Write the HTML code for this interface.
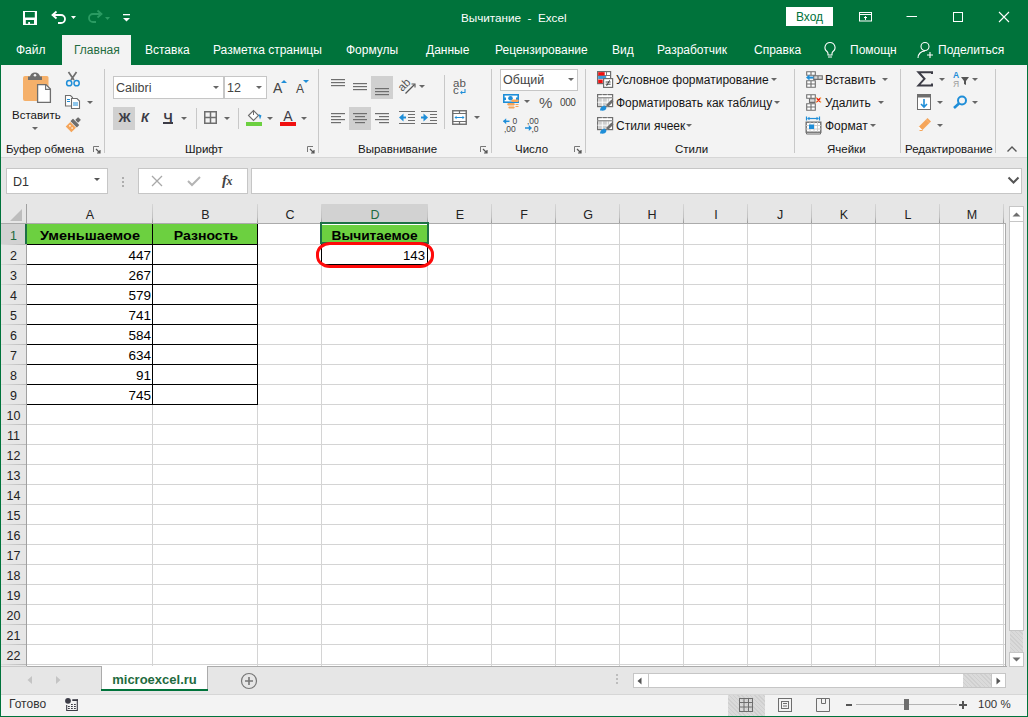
<!DOCTYPE html>
<html><head><meta charset="utf-8"><style>
html,body{margin:0;padding:0;}
body{width:1028px;height:717px;position:relative;overflow:hidden;background:#E6E6E6;font-family:"Liberation Sans",sans-serif;}
.t{position:absolute;white-space:pre;line-height:14px;font-family:"Liberation Sans",sans-serif;}
svg{overflow:visible}
</style></head><body>
<div style="position:absolute;left:0px;top:0px;width:1028px;height:65px;background:#00733B"></div>
<div class="t" style="left:461px;top:11px;color:#fff;font-size:11.7px">Вычитание&nbsp; - &nbsp;Excel</div>
<div style="position:absolute;left:786px;top:7px;width:47px;height:19px;background:#fff"></div>
<div class="t" style="left:786px;top:10px;width:47px;text-align:center;color:#00733B;font-size:12px">Вход</div>
<svg style="position:absolute;left:855px;top:8px;" width="20" height="18" viewBox="0 0 20 18"><rect x="4.5" y="4.5" width="12" height="8.5" fill="none" stroke="#fff"/><line x1="4" y1="6.5" x2="17" y2="6.5" stroke="#fff"/><path d="M10.5 12V8.5M9 10l1.5-1.5L12 10" fill="none" stroke="#fff"/></svg>
<svg style="position:absolute;left:902px;top:8px;" width="20" height="18" viewBox="0 0 20 18"><line x1="4.5" y1="8.5" x2="15" y2="8.5" stroke="#fff"/></svg>
<svg style="position:absolute;left:948px;top:8px;" width="20" height="18" viewBox="0 0 20 18"><rect x="5.5" y="4.5" width="9" height="9" fill="none" stroke="#fff"/></svg>
<svg style="position:absolute;left:994px;top:8px;" width="20" height="18" viewBox="0 0 20 18"><path d="M5 4l10 10M15 4L5 14" stroke="#fff" stroke-width="1.1"/></svg>
<svg style="position:absolute;left:20px;top:8px;" width="20" height="20" viewBox="0 0 20 20"><rect x="3" y="3" width="14" height="14" fill="#fff"/><rect x="5" y="4" width="9.8" height="5.5" fill="#00733B"/><rect x="5.8" y="12" width="8.2" height="2" fill="#00733B"/><rect x="5.8" y="14" width="2.4" height="1.8" fill="#00733B"/><rect x="10" y="14" width="4" height="1.8" fill="#00733B"/></svg>
<svg style="position:absolute;left:48px;top:9px;" width="30" height="20" viewBox="0 0 30 20"><path d="M6 6h7a4 4 0 010 8h-3" fill="none" stroke="#fff" stroke-width="1.8"/><path d="M8.5 2.5L4.5 6l4 3.5" fill="none" stroke="#fff" stroke-width="1.8"/><path d="M23 7h5l-2.5 3z" fill="#fff"/></svg>
<svg style="position:absolute;left:86px;top:8px;" width="30" height="20" viewBox="0 0 30 20"><path d="M14 6H7a4 4 0 000 8h3" fill="none" stroke="#2A9B62" stroke-width="1.8"/><path d="M11.5 2.5L15.5 6l-4 3.5" fill="none" stroke="#2A9B62" stroke-width="1.8"/><path d="M19 9h5l-2.5 3z" fill="#2A9B62"/></svg>
<svg style="position:absolute;left:120px;top:8px;" width="14" height="20" viewBox="0 0 14 20"><rect x="3" y="6" width="7" height="1.3" fill="#fff"/><path d="M3 10h7l-3.5 3.5z" fill="#fff"/></svg>
<div style="position:absolute;left:62px;top:35px;width:69px;height:30px;background:#F3F3F3"></div>
<div class="t" style="left:16px;top:43px;color:#fff;font-size:12px">Файл</div>
<div class="t" style="left:74px;top:43px;color:#1F6B40;font-size:12px">Главная</div>
<div class="t" style="left:145px;top:43px;color:#fff;font-size:12px">Вставка</div>
<div class="t" style="left:213px;top:43px;color:#fff;font-size:12px">Разметка страницы</div>
<div class="t" style="left:346px;top:43px;color:#fff;font-size:12px">Формулы</div>
<div class="t" style="left:426px;top:43px;color:#fff;font-size:12px">Данные</div>
<div class="t" style="left:495px;top:43px;color:#fff;font-size:12px">Рецензирование</div>
<div class="t" style="left:612px;top:43px;color:#fff;font-size:12px">Вид</div>
<div class="t" style="left:657px;top:43px;color:#fff;font-size:12px">Разработчик</div>
<div class="t" style="left:754px;top:43px;color:#fff;font-size:12px">Справка</div>
<div class="t" style="left:850px;top:43px;color:#fff;font-size:12px">Помощн</div>
<div class="t" style="left:938px;top:43px;color:#fff;font-size:12px">Поделиться</div>
<svg style="position:absolute;left:822px;top:40px;" width="16" height="20" viewBox="0 0 16 20"><path d="M8 2.5a5 5 0 00-3 9c.7.6 1 1.3 1 2.2V15h4v-1.3c0-.9.3-1.6 1-2.2a5 5 0 00-3-9z" fill="none" stroke="#fff" stroke-width="1.1"/><line x1="6" y1="17" x2="10" y2="17" stroke="#fff"/></svg>
<svg style="position:absolute;left:916px;top:40px;" width="20" height="20" viewBox="0 0 20 20"><circle cx="9" cy="6.5" r="4" fill="none" stroke="#fff" stroke-width="1.1"/><path d="M2 18c0-4 3-7 7-7" fill="none" stroke="#fff" stroke-width="1.1"/><path d="M14 12v6M11 15h6" stroke="#fff" stroke-width="1.1"/></svg>
<div style="position:absolute;left:1px;top:65px;width:1026px;height:92px;background:#F3F3F3"></div>
<div style="position:absolute;left:1px;top:157px;width:1026px;height:1px;background:#D6D6D6"></div>
<div style="position:absolute;left:1px;top:158px;width:1026px;height:508px;background:#E6E6E6"></div>
<div style="position:absolute;left:104px;top:69px;width:1px;height:84px;background:#C8C8C8"></div>
<div style="position:absolute;left:318px;top:69px;width:1px;height:84px;background:#C8C8C8"></div>
<div style="position:absolute;left:491px;top:69px;width:1px;height:84px;background:#C8C8C8"></div>
<div style="position:absolute;left:585px;top:69px;width:1px;height:84px;background:#C8C8C8"></div>
<div style="position:absolute;left:794px;top:69px;width:1px;height:84px;background:#C8C8C8"></div>
<div style="position:absolute;left:900px;top:69px;width:1px;height:84px;background:#C8C8C8"></div>
<div style="position:absolute;left:995px;top:69px;width:1px;height:84px;background:#C8C8C8"></div>
<div class="t" style="left:6px;top:142px;color:#161616;font-size:11.5px">Буфер обмена</div>
<div class="t" style="left:185px;top:142px;color:#161616;font-size:11.5px">Шрифт</div>
<div class="t" style="left:358px;top:142px;color:#161616;font-size:11.5px">Выравнивание</div>
<div class="t" style="left:515px;top:142px;color:#161616;font-size:11.5px">Число</div>
<div class="t" style="left:675px;top:142px;color:#161616;font-size:11.5px">Стили</div>
<div class="t" style="left:827px;top:142px;color:#161616;font-size:11.5px">Ячейки</div>
<div class="t" style="left:905px;top:142px;color:#161616;font-size:11.5px">Редактирование</div>
<svg style="position:absolute;left:93px;top:146px;" width="8" height="8" viewBox="0 0 8 8"><path d="M0.5 6V0.5H6" fill="none" stroke="#777"/><path d="M3 3l4 4M7 4v3H4" fill="none" stroke="#555" stroke-width="1.2"/></svg>
<svg style="position:absolute;left:307px;top:146px;" width="8" height="8" viewBox="0 0 8 8"><path d="M0.5 6V0.5H6" fill="none" stroke="#777"/><path d="M3 3l4 4M7 4v3H4" fill="none" stroke="#555" stroke-width="1.2"/></svg>
<svg style="position:absolute;left:480px;top:146px;" width="8" height="8" viewBox="0 0 8 8"><path d="M0.5 6V0.5H6" fill="none" stroke="#777"/><path d="M3 3l4 4M7 4v3H4" fill="none" stroke="#555" stroke-width="1.2"/></svg>
<svg style="position:absolute;left:574px;top:146px;" width="8" height="8" viewBox="0 0 8 8"><path d="M0.5 6V0.5H6" fill="none" stroke="#777"/><path d="M3 3l4 4M7 4v3H4" fill="none" stroke="#555" stroke-width="1.2"/></svg>
<svg style="position:absolute;left:1006px;top:144px;" width="12" height="9" viewBox="0 0 12 9"><path d="M1.5 7.5l4.5-4.5 4.5 4.5" fill="none" stroke="#555" stroke-width="1.4"/></svg>
<svg style="position:absolute;left:0px;top:0px;" width="100" height="140" viewBox="0 0 100 140">
<path d="M25 76h22a1.5 1.5 0 011.5 1.5V101H25a2 2 0 01-2-2V78a2 2 0 012-2z" fill="#F5B06A"/>
<path d="M28 76.5h14v3.5H28z" fill="#6E6E6E"/>
<path d="M30 77a5 4.5 0 0110 0z" fill="#6E6E6E"/>
<circle cx="35" cy="75.3" r="1.3" fill="#F3F3F3"/>
<path d="M37.6 84.6h8.4l4.4 4.4v13.4H37.6z" fill="#fff" stroke="#6E6E6E" stroke-width="1.3"/>
<path d="M45.6 84.6v4.8h4.8" fill="none" stroke="#6E6E6E" stroke-width="1.1"/>
<path d="M68.5 72l5.5 8M76.5 72l-5.5 8" stroke="#6E6E6E" stroke-width="1.7"/>
<circle cx="69.2" cy="83.2" r="2.6" fill="none" stroke="#1F8ED8" stroke-width="1.5"/>
<circle cx="76.6" cy="83.2" r="2.6" fill="none" stroke="#1F8ED8" stroke-width="1.5"/>
<path d="M65.5 95.5h5l2 2v8.5h-7z" fill="#fff" stroke="#6E6E6E" stroke-width="1.1"/>
<path d="M71.5 98.5h5.5l2.5 2.5v7.5h-8z" fill="#fff" stroke="#6E6E6E" stroke-width="1.1"/>
<path d="M67 99.5h3M67 101.5h3M73 103h5M73 105h5" stroke="#1F8ED8" stroke-width="1"/>
<g transform="translate(73.5 124.5) rotate(45)"><rect x="-4" y="0.5" width="8" height="6.5" fill="#F5A55A"/><circle cx="-1.5" cy="3.5" r="0.8" fill="#fff"/><circle cx="1.5" cy="3.5" r="0.8" fill="#fff"/><rect x="-4.5" y="-3.8" width="9" height="3.6" rx="0.5" fill="#6E6E6E"/><rect x="-2" y="-8.5" width="4" height="4" rx="0.5" fill="#6E6E6E"/></g>
</svg>
<div class="t" style="left:12px;top:108px;color:#161616;font-size:11.5px">Вставить</div>
<svg style="position:absolute;left:32px;top:127px;" width="6" height="4" viewBox="0 0 6 4"><path d="M0 0h6l-3 3z" fill="#666"/></svg>
<svg style="position:absolute;left:87px;top:101px;" width="6" height="4" viewBox="0 0 6 4"><path d="M0 0h6l-3 3z" fill="#666"/></svg>
<div style="position:absolute;left:113px;top:76px;width:111px;height:23px;background:#fff;border:1px solid #C6C6C6;box-sizing:border-box"></div>
<div style="position:absolute;left:224px;top:76px;width:43px;height:23px;background:#fff;border:1px solid #C6C6C6;box-sizing:border-box"></div>
<div class="t" style="left:116px;top:81px;color:#444;font-size:12.5px">Calibri</div>
<div class="t" style="left:227px;top:81px;color:#444;font-size:12.5px">12</div>
<svg style="position:absolute;left:213px;top:86px;" width="6" height="4" viewBox="0 0 6 4"><path d="M0 0h6l-3 3z" fill="#666"/></svg>
<svg style="position:absolute;left:256px;top:86px;" width="6" height="4" viewBox="0 0 6 4"><path d="M0 0h6l-3 3z" fill="#666"/></svg>
<div class="t" style="left:273px;top:81px;color:#444;font-size:14px">A</div>
<svg style="position:absolute;left:281px;top:80px;" width="6" height="3" viewBox="0 0 6 3"><path d="M0 3h6L3 0z" fill="#1F8ED8"/></svg>
<div class="t" style="left:296px;top:82px;color:#444;font-size:12px">A</div>
<svg style="position:absolute;left:303px;top:80px;" width="6" height="3" viewBox="0 0 6 3"><path d="M0 0h6L3 3z" fill="#1F8ED8"/></svg>
<div style="position:absolute;left:113px;top:107px;width:22px;height:23px;background:#D0D0D0"></div>
<div class="t" style="left:113px;top:111px;width:23px;text-align:center;color:#3C3C46;font-size:13.5px;font-weight:bold">Ж</div>
<div class="t" style="left:136px;top:111px;width:18px;text-align:center;color:#3C3C46;font-size:13px;font-weight:bold;font-style:italic">К</div>
<div class="t" style="left:160px;top:111px;width:16px;text-align:center;color:#3C3C46;font-size:13px;font-weight:bold">Ч</div>
<div style="position:absolute;left:163px;top:122px;width:10px;height:2px;background:#3C3C46"></div>
<svg style="position:absolute;left:181px;top:117px;" width="6" height="4" viewBox="0 0 6 4"><path d="M0 0h6l-3 3z" fill="#666"/></svg>
<div style="position:absolute;left:196px;top:108px;width:1px;height:21px;background:#C8C8C8"></div>
<svg style="position:absolute;left:204px;top:111px;" width="13" height="13" viewBox="0 0 13 13"><rect x="0.75" y="0.75" width="11.5" height="11.5" fill="none" stroke="#6E6E6E" stroke-width="1.5"/><path d="M6.5 0.5v12M0.5 6.5h12" stroke="#6E6E6E" stroke-width="1.5"/></svg>
<svg style="position:absolute;left:224px;top:117px;" width="6" height="4" viewBox="0 0 6 4"><path d="M0 0h6l-3 3z" fill="#666"/></svg>
<div style="position:absolute;left:238px;top:108px;width:1px;height:21px;background:#C8C8C8"></div>
<svg style="position:absolute;left:246px;top:109px;" width="18" height="13" viewBox="0 0 18 13"><path d="M2.5 6.5l5-5 5 5-5 5z" fill="#fff" stroke="#6E6E6E" stroke-width="1.1"/><path d="M7.5 1v5" stroke="#6E6E6E"/><path d="M12.5 5l3 1.5-1.5 4z" fill="#1F8ED8"/></svg>
<div style="position:absolute;left:246px;top:122px;width:16px;height:4px;background:#6CD040"></div>
<svg style="position:absolute;left:267px;top:117px;" width="6" height="4" viewBox="0 0 6 4"><path d="M0 0h6l-3 3z" fill="#666"/></svg>
<div class="t" style="left:280px;top:109px;width:16px;text-align:center;color:#3C3C46;font-size:14px">A</div>
<div style="position:absolute;left:280px;top:122px;width:16px;height:4px;background:#F01010"></div>
<svg style="position:absolute;left:301px;top:117px;" width="6" height="4" viewBox="0 0 6 4"><path d="M0 0h6l-3 3z" fill="#666"/></svg>
<svg style="position:absolute;left:331px;top:79px;" width="16" height="11" viewBox="0 0 16 11"><rect x="0" y="0" width="14" height="1.2" fill="#6E6E6E"/><rect x="0" y="3" width="14" height="1.2" fill="#6E6E6E"/><rect x="0" y="6" width="14" height="1.2" fill="#6E6E6E"/></svg>
<svg style="position:absolute;left:353px;top:83px;" width="16" height="11" viewBox="0 0 16 11"><rect x="0" y="0" width="14" height="1.2" fill="#6E6E6E"/><rect x="0" y="3" width="14" height="1.2" fill="#6E6E6E"/><rect x="0" y="6" width="14" height="1.2" fill="#6E6E6E"/></svg>
<div style="position:absolute;left:371px;top:76px;width:22px;height:23px;background:#D0D0D0"></div>
<svg style="position:absolute;left:375px;top:88px;" width="16" height="11" viewBox="0 0 16 11"><rect x="0" y="0" width="14" height="1.2" fill="#6E6E6E"/><rect x="0" y="3" width="14" height="1.2" fill="#6E6E6E"/><rect x="0" y="6" width="14" height="1.2" fill="#6E6E6E"/></svg>
<svg style="position:absolute;left:396px;top:77px;" width="26" height="20" viewBox="0 0 26 20"><text x="2" y="11" font-family="Liberation Sans" font-size="11.5" fill="#555" transform="rotate(-45 9 8)">ab</text><path d="M9.5 16.5l9-9" fill="none" stroke="#555" stroke-width="1.3"/><path d="M15.5 7h3.5v3.5" fill="none" stroke="#555" stroke-width="1.1"/></svg>
<svg style="position:absolute;left:419px;top:85px;" width="6" height="4" viewBox="0 0 6 4"><path d="M0 0h6l-3 3z" fill="#666"/></svg>
<div style="position:absolute;left:444px;top:75px;width:1px;height:54px;background:#C8C8C8"></div>
<div class="t" style="left:453px;top:76px;color:#555;font-size:11.5px">ab</div>
<div class="t" style="left:453px;top:83px;color:#555;font-size:11.5px">c</div>
<svg style="position:absolute;left:460px;top:89px;" width="6" height="6" viewBox="0 0 6 6"><path d="M5 0v3.5H1.5" fill="none" stroke="#1F8ED8" stroke-width="1.1"/><path d="M0 3.5l2.2-2v4z" fill="#1F8ED8"/></svg>
<svg style="position:absolute;left:331px;top:113px;" width="16" height="14" viewBox="0 0 16 14"><rect x="0" y="0" width="14" height="1.2" fill="#6E6E6E"/><rect x="0" y="3" width="10" height="1.2" fill="#6E6E6E"/><rect x="0" y="6" width="14" height="1.2" fill="#6E6E6E"/><rect x="0" y="9" width="10" height="1.2" fill="#6E6E6E"/></svg>
<div style="position:absolute;left:349px;top:107px;width:22px;height:23px;background:#D0D0D0"></div>
<svg style="position:absolute;left:353px;top:113px;" width="16" height="14" viewBox="0 0 16 14"><rect x="0" y="0" width="14" height="1.2" fill="#6E6E6E"/><rect x="2" y="3" width="10" height="1.2" fill="#6E6E6E"/><rect x="0" y="6" width="14" height="1.2" fill="#6E6E6E"/><rect x="2" y="9" width="10" height="1.2" fill="#6E6E6E"/></svg>
<svg style="position:absolute;left:375px;top:113px;" width="16" height="14" viewBox="0 0 16 14"><rect x="0" y="0" width="14" height="1.2" fill="#6E6E6E"/><rect x="4" y="3" width="10" height="1.2" fill="#6E6E6E"/><rect x="0" y="6" width="14" height="1.2" fill="#6E6E6E"/><rect x="4" y="9" width="10" height="1.2" fill="#6E6E6E"/></svg>
<svg style="position:absolute;left:399px;top:110px;" width="18" height="16" viewBox="0 0 18 16"><path d="M0 1.5h16M9 4.5h7M9 7.5h7M9 10.5h7M0 13.5h16" stroke="#6E6E6E" stroke-width="1.2"/><path d="M0 7.5l4.5-4v8z" fill="#1F8ED8"/><path d="M3 7.5h4" stroke="#1F8ED8" stroke-width="2"/></svg>
<svg style="position:absolute;left:421px;top:110px;" width="18" height="16" viewBox="0 0 18 16"><path d="M0 1.5h16M9 4.5h7M9 7.5h7M9 10.5h7M0 13.5h16" stroke="#6E6E6E" stroke-width="1.2"/><path d="M7 7.5l-4.5-4v8z" fill="#1F8ED8"/><path d="M0 7.5h4" stroke="#1F8ED8" stroke-width="2"/></svg>
<svg style="position:absolute;left:452px;top:110px;" width="16" height="15" viewBox="0 0 16 15"><rect x="0.75" y="0.75" width="13.5" height="13.5" fill="#fff" stroke="#6E6E6E" stroke-width="1.4"/><path d="M0.5 3.5h14M0.5 11.5h14M7.5 0.5v3M7.5 11.5v3" stroke="#6E6E6E" stroke-width="1.2"/><path d="M4 7.5h7" stroke="#1F8ED8" stroke-width="1"/><path d="M2.5 7.5l2-1.7v3.4zM12.5 7.5l-2-1.7v3.4z" fill="#1F8ED8"/></svg>
<svg style="position:absolute;left:474px;top:116px;" width="6" height="4" viewBox="0 0 6 4"><path d="M0 0h6l-3 3z" fill="#666"/></svg>
<div style="position:absolute;left:500px;top:69px;width:78px;height:22px;background:#fff;border:1px solid #C6C6C6;box-sizing:border-box"></div>
<div class="t" style="left:503px;top:73px;color:#444;font-size:12.5px">Общий</div>
<svg style="position:absolute;left:568px;top:78px;" width="6" height="4" viewBox="0 0 6 4"><path d="M0 0h6l-3 3z" fill="#666"/></svg>
<svg style="position:absolute;left:500px;top:90px;" width="22" height="22" viewBox="0 0 22 22"><rect x="3.8" y="4.8" width="14.4" height="7.4" fill="#fff" stroke="#1F8ED8" stroke-width="1.6"/><path d="M3 7.5h3v2.5H3zM16 7.5h3v2.5h-3z" fill="#1F8ED8"/><circle cx="10.5" cy="8.3" r="2.3" fill="#1F8ED8"/><path d="M12 12h6l1-1.2-1-1.2h-6l-1 1.2z" fill="#F5A55A"/><path d="M8 15.5h6l1-1.2-1-1.2H8l-1 1.2z" fill="#F5A55A"/><path d="M9 18.5h5l.8-1-.8-1H9l-.8 1z" fill="#F5A55A"/><path d="M15.5 14.5h3M15.5 16.5h3" stroke="#F5A55A" stroke-width="1"/></svg>
<svg style="position:absolute;left:524px;top:100px;" width="6" height="4" viewBox="0 0 6 4"><path d="M0 0h6l-3 3z" fill="#666"/></svg>
<div class="t" style="left:539px;top:96px;color:#555;font-size:15px">%</div>
<div class="t" style="left:560px;top:96px;color:#444;font-size:10px;letter-spacing:-0.4px">000</div>
<svg style="position:absolute;left:500px;top:114px;" width="22" height="20" viewBox="0 0 22 20"><text x="12.5" y="10" font-family="Liberation Sans" font-size="8.5" fill="#444">0</text><text x="4" y="17.5" font-family="Liberation Sans" font-size="8.5" fill="#444">,00</text><path d="M3.5 7.3h6" stroke="#1F8ED8" stroke-width="1.5"/><path d="M3 7.3l3.2-3v6z" fill="#1F8ED8"/></svg>
<svg style="position:absolute;left:522px;top:114px;" width="22" height="20" viewBox="0 0 22 20"><text x="5" y="10" font-family="Liberation Sans" font-size="8.5" fill="#444">,00</text><text x="9.5" y="17.5" font-family="Liberation Sans" font-size="8.5" fill="#444">,0</text><path d="M3 14h6" stroke="#1F8ED8" stroke-width="1.5"/><path d="M10 14l-3.2-3v6z" fill="#1F8ED8"/></svg>
<svg style="position:absolute;left:597px;top:71px;" width="17" height="17" viewBox="0 0 17 17"><rect x="0.6" y="0.6" width="13" height="12" fill="#fff" stroke="#6E6E6E" stroke-width="1.2"/><path d="M5 0.5v4M9.5 0.5v4M0.5 4.5h13" stroke="#6E6E6E" stroke-width="0.9"/><rect x="1.2" y="1.2" width="6.5" height="3.3" fill="#F01010"/><rect x="1.2" y="5" width="8" height="3" fill="#3C9AD8"/><rect x="1.2" y="8.5" width="4.5" height="3.6" fill="#F01010"/><rect x="6.6" y="7.6" width="9" height="8.8" fill="#fff" stroke="#6E6E6E" stroke-width="1.2"/><path d="M8.6 11h5M8.6 13.2h5M12.6 9.3l-3 5.6" stroke="#333" stroke-width="0.9"/></svg>
<div class="t" style="left:616px;top:73px;color:#161616;font-size:12px">Условное форматирование</div>
<svg style="position:absolute;left:771px;top:78px;" width="6" height="4" viewBox="0 0 6 4"><path d="M0 0h6l-3 3z" fill="#666"/></svg>
<svg style="position:absolute;left:597px;top:94px;" width="17" height="17" viewBox="0 0 17 17"><rect x="0.6" y="0.6" width="15" height="12" fill="#fff" stroke="#6E6E6E" stroke-width="1.2"/><rect x="1.2" y="4" width="11" height="8" fill="#CFCFCF"/><path d="M0.5 3.8h15M5.3 0.5v12M10.3 0.5v12M0.5 8.2h12" stroke="#fff" stroke-width="0.9"/><path d="M0.5 3.8h15" stroke="#6E6E6E" stroke-width="1"/><path d="M9 11l5.5-5.5 2 2-5.5 5.5z" fill="#6E6E6E"/><path d="M3 16.5c0-2.5 1.5-4.5 4.5-5l2 2c-.5 3-2.5 3.5-6.5 3z" fill="#1F8ED8"/></svg>
<div class="t" style="left:616px;top:96px;color:#161616;font-size:12px">Форматировать как таблицу</div>
<svg style="position:absolute;left:774px;top:101px;" width="6" height="4" viewBox="0 0 6 4"><path d="M0 0h6l-3 3z" fill="#666"/></svg>
<svg style="position:absolute;left:597px;top:117px;" width="17" height="17" viewBox="0 0 17 17"><rect x="0.6" y="0.6" width="15" height="12" fill="#fff" stroke="#6E6E6E" stroke-width="1.2"/><rect x="1.2" y="4" width="11" height="8" fill="#CFCFCF"/><path d="M0.5 3.8h15M5.3 0.5v12M10.3 0.5v12M0.5 8.2h12" stroke="#fff" stroke-width="0.9"/><path d="M0.5 3.8h15" stroke="#6E6E6E" stroke-width="1"/><path d="M9 11l5.5-5.5 2 2-5.5 5.5z" fill="#6E6E6E"/><path d="M3 16.5c0-2.5 1.5-4.5 4.5-5l2 2c-.5 3-2.5 3.5-6.5 3z" fill="#1F8ED8"/></svg>
<div class="t" style="left:616px;top:119px;color:#161616;font-size:12px">Стили ячеек</div>
<svg style="position:absolute;left:686px;top:124px;" width="6" height="4" viewBox="0 0 6 4"><path d="M0 0h6l-3 3z" fill="#666"/></svg>
<svg style="position:absolute;left:805px;top:70px;" width="18" height="18" viewBox="0 0 18 18"><path d="M1.7 1.7h8.6v3.6H1.7zM6 1.7v3.6M1.7 10.7h8.6v6.6H1.7zM1.7 14h8.6M6 10.7v6.6" fill="#fff" stroke="#6E6E6E" stroke-width="1.1"/><path d="M8.7 5.8h8.6v3.6H8.7zM13 5.8v3.6" fill="#D8D8D8" stroke="#6E6E6E" stroke-width="1.1"/><path d="M3.5 7.6h5" stroke="#1F8ED8" stroke-width="2"/><path d="M1 7.6l3.5-3v6z" fill="#1F8ED8"/></svg>
<div class="t" style="left:825px;top:73px;color:#161616;font-size:12px">Вставить</div>
<svg style="position:absolute;left:882px;top:78px;" width="6" height="4" viewBox="0 0 6 4"><path d="M0 0h6l-3 3z" fill="#666"/></svg>
<svg style="position:absolute;left:805px;top:93px;" width="18" height="18" viewBox="0 0 18 18"><path d="M1.7 1.7h8.6v3.6H1.7zM6 1.7v3.6M1.7 10.7h8.6v6.6H1.7zM1.7 14h8.6M6 10.7v6.6" fill="#fff" stroke="#6E6E6E" stroke-width="1.1"/><path d="M4.5 5.8h5.5v3.6H4.5z" fill="#D8D8D8" stroke="#6E6E6E" stroke-width="1.1"/><path d="M11 4.5l5 5M16 4.5l-5 5" stroke="#F5A55A" stroke-width="1.5"/><path d="M12 5.5l3 3M15 5.5l-3 3" stroke="#F01010" stroke-width="1.2"/></svg>
<div class="t" style="left:825px;top:96px;color:#161616;font-size:12px">Удалить</div>
<svg style="position:absolute;left:878px;top:101px;" width="6" height="4" viewBox="0 0 6 4"><path d="M0 0h6l-3 3z" fill="#666"/></svg>
<svg style="position:absolute;left:805px;top:116px;" width="18" height="18" viewBox="0 0 18 18"><path d="M3 2.5h10" stroke="#1F8ED8" stroke-width="1.2"/><path d="M1.5 0.5v4M14.5 0.5v4" stroke="#1F8ED8" stroke-width="1.2"/><path d="M2 2.5l2.5-1.8v3.6zM14 2.5l-2.5-1.8v3.6z" fill="#1F8ED8"/><rect x="1.2" y="6.2" width="14.6" height="10" fill="#fff" stroke="#6E6E6E" stroke-width="1.4"/><path d="M1 9.5h15M1 13h15M5 6v10M9 6v10M12.5 6v10" stroke="#C8C8C8" stroke-width="0.9"/><rect x="4" y="8.5" width="5" height="4.5" fill="#1F8ED8"/><path d="M1.5 16.5v1.5h14v-1.5" fill="none" stroke="#6E6E6E" stroke-width="1"/></svg>
<div class="t" style="left:825px;top:119px;color:#161616;font-size:12px">Формат</div>
<svg style="position:absolute;left:870px;top:124px;" width="6" height="4" viewBox="0 0 6 4"><path d="M0 0h6l-3 3z" fill="#666"/></svg>
<svg style="position:absolute;left:917px;top:71px;" width="17" height="17" viewBox="0 0 17 17"><path d="M15 3V1.2H1.5l6 6.6-6 6.6H15v-1.8" fill="none" stroke="#3C3C46" stroke-width="2" stroke-linejoin="miter"/></svg>
<svg style="position:absolute;left:939px;top:78px;" width="6" height="4" viewBox="0 0 6 4"><path d="M0 0h6l-3 3z" fill="#666"/></svg>
<svg style="position:absolute;left:952px;top:70px;" width="18" height="19" viewBox="0 0 18 19"><text x="1" y="8" font-family="Liberation Sans" font-weight="bold" font-size="8.5" fill="#1F8ED8">A</text><text x="1" y="17" font-family="Liberation Sans" font-size="8.5" fill="#9A9A9A">Я</text><path d="M9 7h8l-3 4v4l-2-1v-3z" fill="#555"/></svg>
<svg style="position:absolute;left:972px;top:78px;" width="6" height="4" viewBox="0 0 6 4"><path d="M0 0h6l-3 3z" fill="#666"/></svg>
<svg style="position:absolute;left:917px;top:94px;" width="15" height="16" viewBox="0 0 15 16"><rect x="0.5" y="0.5" width="13" height="15" fill="#fff" stroke="#6E6E6E"/><rect x="0.5" y="0.5" width="13" height="3" fill="#6E6E6E"/><path d="M7 5v8M4 10l3 3 3-3" fill="none" stroke="#1F8ED8" stroke-width="1.6"/></svg>
<svg style="position:absolute;left:937px;top:101px;" width="6" height="4" viewBox="0 0 6 4"><path d="M0 0h6l-3 3z" fill="#666"/></svg>
<svg style="position:absolute;left:952px;top:95px;" width="16" height="14" viewBox="0 0 16 14"><circle cx="10" cy="5.5" r="4" fill="none" stroke="#1F8ED8" stroke-width="2"/><path d="M7 8.5L2 13" stroke="#1F8ED8" stroke-width="2.6"/></svg>
<svg style="position:absolute;left:972px;top:101px;" width="6" height="4" viewBox="0 0 6 4"><path d="M0 0h6l-3 3z" fill="#666"/></svg>
<svg style="position:absolute;left:917px;top:117px;" width="15" height="15" viewBox="0 0 15 15"><path d="M5 13.5l-3.5-3.5 7.5-7.5 3.5 3.5z" fill="#F5A55A"/><path d="M9 2.5l1.5-1.5 3.5 3.5-1.5 1.5z" fill="#F5A55A"/><path d="M1.5 10l3.5 3.5" stroke="#fff" stroke-width="1.2"/><path d="M2.5 13.5h3" stroke="#F5A55A" stroke-width="1"/></svg>
<svg style="position:absolute;left:937px;top:124px;" width="6" height="4" viewBox="0 0 6 4"><path d="M0 0h6l-3 3z" fill="#666"/></svg>
<div style="position:absolute;left:6px;top:168px;width:102px;height:26px;background:#fff;border:1px solid #C6C6C6;box-sizing:border-box"></div>
<div class="t" style="left:13px;top:175px;color:#333;font-size:12.5px">D1</div>
<svg style="position:absolute;left:94px;top:178px;" width="6" height="4" viewBox="0 0 6 4"><path d="M0 0h6l-3 3z" fill="#555"/></svg>
<div style="position:absolute;left:122px;top:177px;width:2px;height:2px;background:#ADADAD"></div>
<div style="position:absolute;left:122px;top:181px;width:2px;height:2px;background:#ADADAD"></div>
<div style="position:absolute;left:122px;top:185px;width:2px;height:2px;background:#ADADAD"></div>
<div style="position:absolute;left:138px;top:168px;width:110px;height:26px;background:#fff;border:1px solid #C6C6C6;box-sizing:border-box"></div>
<svg style="position:absolute;left:151px;top:175px;" width="12" height="12" viewBox="0 0 12 12"><path d="M1 1l10 10M11 1L1 11" stroke="#A8A8A8" stroke-width="1.3"/></svg>
<svg style="position:absolute;left:187px;top:175px;" width="14" height="12" viewBox="0 0 14 12"><path d="M1 6l4 4 8-8" fill="none" stroke="#B4B4B4" stroke-width="2"/></svg>
<div class="t" style="left:222px;top:173px;color:#444;font-size:15px;font-family:'Liberation Serif',serif;letter-spacing:-0.5px"><b><i>f</i><span style="font-size:12px"><i>x</i></span></b></div>
<div style="position:absolute;left:251px;top:168px;width:771px;height:26px;background:#fff;border:1px solid #C6C6C6;box-sizing:border-box"></div>
<svg style="position:absolute;left:1007px;top:176px;" width="13" height="9" viewBox="0 0 13 9"><path d="M1.5 1.5l5 5 5-5" fill="none" stroke="#555" stroke-width="2"/></svg>
<div style="position:absolute;left:1px;top:204px;width:1004px;height:20px;background:#E6E6E6"></div>
<div style="position:absolute;left:27px;top:224px;width:978px;height:442px;background:#fff"></div>
<div style="position:absolute;left:27px;top:244px;width:978px;height:1px;background:#D4D4D4"></div>
<div style="position:absolute;left:27px;top:264px;width:978px;height:1px;background:#D4D4D4"></div>
<div style="position:absolute;left:27px;top:284px;width:978px;height:1px;background:#D4D4D4"></div>
<div style="position:absolute;left:27px;top:304px;width:978px;height:1px;background:#D4D4D4"></div>
<div style="position:absolute;left:27px;top:324px;width:978px;height:1px;background:#D4D4D4"></div>
<div style="position:absolute;left:27px;top:344px;width:978px;height:1px;background:#D4D4D4"></div>
<div style="position:absolute;left:27px;top:364px;width:978px;height:1px;background:#D4D4D4"></div>
<div style="position:absolute;left:27px;top:384px;width:978px;height:1px;background:#D4D4D4"></div>
<div style="position:absolute;left:27px;top:404px;width:978px;height:1px;background:#D4D4D4"></div>
<div style="position:absolute;left:27px;top:424px;width:978px;height:1px;background:#D4D4D4"></div>
<div style="position:absolute;left:27px;top:444px;width:978px;height:1px;background:#D4D4D4"></div>
<div style="position:absolute;left:27px;top:464px;width:978px;height:1px;background:#D4D4D4"></div>
<div style="position:absolute;left:27px;top:484px;width:978px;height:1px;background:#D4D4D4"></div>
<div style="position:absolute;left:27px;top:504px;width:978px;height:1px;background:#D4D4D4"></div>
<div style="position:absolute;left:27px;top:524px;width:978px;height:1px;background:#D4D4D4"></div>
<div style="position:absolute;left:27px;top:544px;width:978px;height:1px;background:#D4D4D4"></div>
<div style="position:absolute;left:27px;top:564px;width:978px;height:1px;background:#D4D4D4"></div>
<div style="position:absolute;left:27px;top:584px;width:978px;height:1px;background:#D4D4D4"></div>
<div style="position:absolute;left:27px;top:604px;width:978px;height:1px;background:#D4D4D4"></div>
<div style="position:absolute;left:27px;top:624px;width:978px;height:1px;background:#D4D4D4"></div>
<div style="position:absolute;left:27px;top:644px;width:978px;height:1px;background:#D4D4D4"></div>
<div style="position:absolute;left:27px;top:664px;width:978px;height:1px;background:#D4D4D4"></div>
<div style="position:absolute;left:152px;top:224px;width:1px;height:442px;background:#D4D4D4"></div>
<div style="position:absolute;left:257px;top:224px;width:1px;height:442px;background:#D4D4D4"></div>
<div style="position:absolute;left:321px;top:224px;width:1px;height:442px;background:#D4D4D4"></div>
<div style="position:absolute;left:427px;top:224px;width:1px;height:442px;background:#D4D4D4"></div>
<div style="position:absolute;left:491px;top:224px;width:1px;height:442px;background:#D4D4D4"></div>
<div style="position:absolute;left:555px;top:224px;width:1px;height:442px;background:#D4D4D4"></div>
<div style="position:absolute;left:619px;top:224px;width:1px;height:442px;background:#D4D4D4"></div>
<div style="position:absolute;left:683px;top:224px;width:1px;height:442px;background:#D4D4D4"></div>
<div style="position:absolute;left:747px;top:224px;width:1px;height:442px;background:#D4D4D4"></div>
<div style="position:absolute;left:811px;top:224px;width:1px;height:442px;background:#D4D4D4"></div>
<div style="position:absolute;left:875px;top:224px;width:1px;height:442px;background:#D4D4D4"></div>
<div style="position:absolute;left:939px;top:224px;width:1px;height:442px;background:#D4D4D4"></div>
<div style="position:absolute;left:1003px;top:224px;width:1px;height:442px;background:#D4D4D4"></div>
<div style="position:absolute;left:1px;top:223px;width:1005px;height:1px;background:#ABABAB"></div>
<div style="position:absolute;left:26px;top:204px;width:1px;height:462px;background:#A0A0A0"></div>
<div style="position:absolute;left:152px;top:204px;width:1px;height:19px;background:linear-gradient(#D6D6D6,#C0C0C0 70%,#9A9A9A)"></div>
<div class="t" style="left:27px;top:208px;width:126px;text-align:center;color:#222;font-size:12.5px">A</div>
<div style="position:absolute;left:257px;top:204px;width:1px;height:19px;background:linear-gradient(#D6D6D6,#C0C0C0 70%,#9A9A9A)"></div>
<div class="t" style="left:153px;top:208px;width:105px;text-align:center;color:#222;font-size:12.5px">B</div>
<div style="position:absolute;left:321px;top:204px;width:1px;height:19px;background:linear-gradient(#D6D6D6,#C0C0C0 70%,#9A9A9A)"></div>
<div class="t" style="left:258px;top:208px;width:64px;text-align:center;color:#222;font-size:12.5px">C</div>
<div style="position:absolute;left:427px;top:204px;width:1px;height:19px;background:linear-gradient(#D6D6D6,#C0C0C0 70%,#9A9A9A)"></div>
<div style="position:absolute;left:322px;top:204px;width:105px;height:19px;background:#D2D2D2"></div>
<div class="t" style="left:322px;top:208px;width:106px;text-align:center;color:#1F6B40;font-size:12.5px">D</div>
<div style="position:absolute;left:491px;top:204px;width:1px;height:19px;background:linear-gradient(#D6D6D6,#C0C0C0 70%,#9A9A9A)"></div>
<div class="t" style="left:428px;top:208px;width:64px;text-align:center;color:#222;font-size:12.5px">E</div>
<div style="position:absolute;left:555px;top:204px;width:1px;height:19px;background:linear-gradient(#D6D6D6,#C0C0C0 70%,#9A9A9A)"></div>
<div class="t" style="left:492px;top:208px;width:64px;text-align:center;color:#222;font-size:12.5px">F</div>
<div style="position:absolute;left:619px;top:204px;width:1px;height:19px;background:linear-gradient(#D6D6D6,#C0C0C0 70%,#9A9A9A)"></div>
<div class="t" style="left:556px;top:208px;width:64px;text-align:center;color:#222;font-size:12.5px">G</div>
<div style="position:absolute;left:683px;top:204px;width:1px;height:19px;background:linear-gradient(#D6D6D6,#C0C0C0 70%,#9A9A9A)"></div>
<div class="t" style="left:620px;top:208px;width:64px;text-align:center;color:#222;font-size:12.5px">H</div>
<div style="position:absolute;left:747px;top:204px;width:1px;height:19px;background:linear-gradient(#D6D6D6,#C0C0C0 70%,#9A9A9A)"></div>
<div class="t" style="left:684px;top:208px;width:64px;text-align:center;color:#222;font-size:12.5px">I</div>
<div style="position:absolute;left:811px;top:204px;width:1px;height:19px;background:linear-gradient(#D6D6D6,#C0C0C0 70%,#9A9A9A)"></div>
<div class="t" style="left:748px;top:208px;width:64px;text-align:center;color:#222;font-size:12.5px">J</div>
<div style="position:absolute;left:875px;top:204px;width:1px;height:19px;background:linear-gradient(#D6D6D6,#C0C0C0 70%,#9A9A9A)"></div>
<div class="t" style="left:812px;top:208px;width:64px;text-align:center;color:#222;font-size:12.5px">K</div>
<div style="position:absolute;left:939px;top:204px;width:1px;height:19px;background:linear-gradient(#D6D6D6,#C0C0C0 70%,#9A9A9A)"></div>
<div class="t" style="left:876px;top:208px;width:64px;text-align:center;color:#222;font-size:12.5px">L</div>
<div style="position:absolute;left:1003px;top:204px;width:1px;height:19px;background:linear-gradient(#D6D6D6,#C0C0C0 70%,#9A9A9A)"></div>
<div class="t" style="left:940px;top:208px;width:64px;text-align:center;color:#222;font-size:12.5px">M</div>
<div style="position:absolute;left:1px;top:224px;width:25px;height:20px;background:#D2D2D2"></div>
<div style="position:absolute;left:1px;top:244px;width:25px;height:1px;background:linear-gradient(90deg,#DCDCDC,#B8B8B8)"></div>
<div class="t" style="left:1px;top:229px;width:25px;text-align:center;color:#1F6B40;font-size:12.5px">1</div>
<div style="position:absolute;left:1px;top:264px;width:25px;height:1px;background:linear-gradient(90deg,#DCDCDC,#B8B8B8)"></div>
<div class="t" style="left:1px;top:249px;width:25px;text-align:center;color:#222;font-size:12.5px">2</div>
<div style="position:absolute;left:1px;top:284px;width:25px;height:1px;background:linear-gradient(90deg,#DCDCDC,#B8B8B8)"></div>
<div class="t" style="left:1px;top:269px;width:25px;text-align:center;color:#222;font-size:12.5px">3</div>
<div style="position:absolute;left:1px;top:304px;width:25px;height:1px;background:linear-gradient(90deg,#DCDCDC,#B8B8B8)"></div>
<div class="t" style="left:1px;top:289px;width:25px;text-align:center;color:#222;font-size:12.5px">4</div>
<div style="position:absolute;left:1px;top:324px;width:25px;height:1px;background:linear-gradient(90deg,#DCDCDC,#B8B8B8)"></div>
<div class="t" style="left:1px;top:309px;width:25px;text-align:center;color:#222;font-size:12.5px">5</div>
<div style="position:absolute;left:1px;top:344px;width:25px;height:1px;background:linear-gradient(90deg,#DCDCDC,#B8B8B8)"></div>
<div class="t" style="left:1px;top:329px;width:25px;text-align:center;color:#222;font-size:12.5px">6</div>
<div style="position:absolute;left:1px;top:364px;width:25px;height:1px;background:linear-gradient(90deg,#DCDCDC,#B8B8B8)"></div>
<div class="t" style="left:1px;top:349px;width:25px;text-align:center;color:#222;font-size:12.5px">7</div>
<div style="position:absolute;left:1px;top:384px;width:25px;height:1px;background:linear-gradient(90deg,#DCDCDC,#B8B8B8)"></div>
<div class="t" style="left:1px;top:369px;width:25px;text-align:center;color:#222;font-size:12.5px">8</div>
<div style="position:absolute;left:1px;top:404px;width:25px;height:1px;background:linear-gradient(90deg,#DCDCDC,#B8B8B8)"></div>
<div class="t" style="left:1px;top:389px;width:25px;text-align:center;color:#222;font-size:12.5px">9</div>
<div style="position:absolute;left:1px;top:424px;width:25px;height:1px;background:linear-gradient(90deg,#DCDCDC,#B8B8B8)"></div>
<div class="t" style="left:1px;top:409px;width:25px;text-align:center;color:#222;font-size:12.5px">10</div>
<div style="position:absolute;left:1px;top:444px;width:25px;height:1px;background:linear-gradient(90deg,#DCDCDC,#B8B8B8)"></div>
<div class="t" style="left:1px;top:429px;width:25px;text-align:center;color:#222;font-size:12.5px">11</div>
<div style="position:absolute;left:1px;top:464px;width:25px;height:1px;background:linear-gradient(90deg,#DCDCDC,#B8B8B8)"></div>
<div class="t" style="left:1px;top:449px;width:25px;text-align:center;color:#222;font-size:12.5px">12</div>
<div style="position:absolute;left:1px;top:484px;width:25px;height:1px;background:linear-gradient(90deg,#DCDCDC,#B8B8B8)"></div>
<div class="t" style="left:1px;top:469px;width:25px;text-align:center;color:#222;font-size:12.5px">13</div>
<div style="position:absolute;left:1px;top:504px;width:25px;height:1px;background:linear-gradient(90deg,#DCDCDC,#B8B8B8)"></div>
<div class="t" style="left:1px;top:489px;width:25px;text-align:center;color:#222;font-size:12.5px">14</div>
<div style="position:absolute;left:1px;top:524px;width:25px;height:1px;background:linear-gradient(90deg,#DCDCDC,#B8B8B8)"></div>
<div class="t" style="left:1px;top:509px;width:25px;text-align:center;color:#222;font-size:12.5px">15</div>
<div style="position:absolute;left:1px;top:544px;width:25px;height:1px;background:linear-gradient(90deg,#DCDCDC,#B8B8B8)"></div>
<div class="t" style="left:1px;top:529px;width:25px;text-align:center;color:#222;font-size:12.5px">16</div>
<div style="position:absolute;left:1px;top:564px;width:25px;height:1px;background:linear-gradient(90deg,#DCDCDC,#B8B8B8)"></div>
<div class="t" style="left:1px;top:549px;width:25px;text-align:center;color:#222;font-size:12.5px">17</div>
<div style="position:absolute;left:1px;top:584px;width:25px;height:1px;background:linear-gradient(90deg,#DCDCDC,#B8B8B8)"></div>
<div class="t" style="left:1px;top:569px;width:25px;text-align:center;color:#222;font-size:12.5px">18</div>
<div style="position:absolute;left:1px;top:604px;width:25px;height:1px;background:linear-gradient(90deg,#DCDCDC,#B8B8B8)"></div>
<div class="t" style="left:1px;top:589px;width:25px;text-align:center;color:#222;font-size:12.5px">19</div>
<div style="position:absolute;left:1px;top:624px;width:25px;height:1px;background:linear-gradient(90deg,#DCDCDC,#B8B8B8)"></div>
<div class="t" style="left:1px;top:609px;width:25px;text-align:center;color:#222;font-size:12.5px">20</div>
<div style="position:absolute;left:1px;top:644px;width:25px;height:1px;background:linear-gradient(90deg,#DCDCDC,#B8B8B8)"></div>
<div class="t" style="left:1px;top:629px;width:25px;text-align:center;color:#222;font-size:12.5px">21</div>
<div style="position:absolute;left:1px;top:664px;width:25px;height:1px;background:linear-gradient(90deg,#DCDCDC,#B8B8B8)"></div>
<div class="t" style="left:1px;top:649px;width:25px;text-align:center;color:#222;font-size:12.5px">22</div>
<svg style="position:absolute;left:8px;top:208px;" width="16" height="14" viewBox="0 0 16 14"><path d="M14 1v12H2z" fill="#BDBDBD"/></svg>
<div style="position:absolute;left:1005px;top:223px;width:1px;height:443px;background:#ABABAB"></div>
<div style="position:absolute;left:27px;top:224px;width:126px;height:20px;background:#6CD040"></div>
<div style="position:absolute;left:153px;top:224px;width:104px;height:20px;background:#6CD040"></div>
<div style="position:absolute;left:322px;top:225px;width:105px;height:19px;background:#6CD040"></div>
<div style="position:absolute;left:27px;top:244px;width:231px;height:1px;background:#000"></div>
<div style="position:absolute;left:27px;top:264px;width:231px;height:1px;background:#000"></div>
<div style="position:absolute;left:27px;top:284px;width:231px;height:1px;background:#000"></div>
<div style="position:absolute;left:27px;top:304px;width:231px;height:1px;background:#000"></div>
<div style="position:absolute;left:27px;top:324px;width:231px;height:1px;background:#000"></div>
<div style="position:absolute;left:27px;top:344px;width:231px;height:1px;background:#000"></div>
<div style="position:absolute;left:27px;top:364px;width:231px;height:1px;background:#000"></div>
<div style="position:absolute;left:27px;top:384px;width:231px;height:1px;background:#000"></div>
<div style="position:absolute;left:27px;top:404px;width:231px;height:1px;background:#000"></div>
<div style="position:absolute;left:152px;top:224px;width:1px;height:181px;background:#000"></div>
<div style="position:absolute;left:257px;top:224px;width:1px;height:181px;background:#000"></div>
<div style="position:absolute;left:321px;top:244px;width:107px;height:1px;background:#000"></div>
<div style="position:absolute;left:321px;top:264px;width:107px;height:1px;background:#000"></div>
<div style="position:absolute;left:321px;top:244px;width:1px;height:21px;background:#000"></div>
<div style="position:absolute;left:427px;top:244px;width:1px;height:21px;background:#000"></div>
<div class="t" style="left:27px;top:229px;width:126px;text-align:center;color:#000;font-size:13.5px;font-weight:bold;transform:scaleX(1.07)">Уменьшаемое</div>
<div class="t" style="left:154px;top:229px;width:104px;text-align:center;color:#000;font-size:13.5px;font-weight:bold;transform:scaleX(1.04)">Разность</div>
<div class="t" style="left:322px;top:229px;width:105px;text-align:center;color:#000;font-size:13.5px;font-weight:bold;transform:scaleX(1.02)">Вычитаемое</div>
<div class="t" style="left:27px;top:249px;width:124px;text-align:right;color:#000;font-size:13.5px">447</div>
<div class="t" style="left:27px;top:269px;width:124px;text-align:right;color:#000;font-size:13.5px">267</div>
<div class="t" style="left:27px;top:289px;width:124px;text-align:right;color:#000;font-size:13.5px">579</div>
<div class="t" style="left:27px;top:309px;width:124px;text-align:right;color:#000;font-size:13.5px">741</div>
<div class="t" style="left:27px;top:329px;width:124px;text-align:right;color:#000;font-size:13.5px">584</div>
<div class="t" style="left:27px;top:349px;width:124px;text-align:right;color:#000;font-size:13.5px">634</div>
<div class="t" style="left:27px;top:369px;width:124px;text-align:right;color:#000;font-size:13.5px">91</div>
<div class="t" style="left:27px;top:389px;width:124px;text-align:right;color:#000;font-size:13.5px">745</div>
<div class="t" style="left:322px;top:249px;width:103px;text-align:right;color:#000;font-size:13.2px">143</div>
<div style="position:absolute;left:320px;top:222px;width:109px;height:22px;border:2px solid #1E7145;box-sizing:border-box"></div>
<div style="position:absolute;left:25px;top:224px;width:2px;height:20px;background:#1E7145"></div>
<div style="position:absolute;left:316px;top:242px;width:118px;height:26px;border:3px solid #FF0A0A;border-radius:14px/12px;box-sizing:border-box"></div>
<div style="position:absolute;left:1009px;top:206px;width:15px;height:461px;background:#E6E6E6"></div>
<div style="position:absolute;left:1009px;top:221px;width:15px;height:410px;background:#fff;border:1px solid #C6C6C6;box-sizing:border-box"></div>
<div style="position:absolute;left:1010px;top:631px;width:13px;height:21px;background-color:#DADADA;background-image:repeating-linear-gradient(45deg,#CFCFCF 0 1px,transparent 1px 3px)"></div>
<div style="position:absolute;left:1009px;top:206px;width:15px;height:16px;background:#fff;border:1px solid #C6C6C6;box-sizing:border-box"></div>
<svg style="position:absolute;left:1011px;top:210px;" width="11" height="8" viewBox="0 0 11 8"><path d="M1.5 6.5h8L5.5 2.5z" fill="#6E6E6E"/></svg>
<div style="position:absolute;left:1009px;top:652px;width:15px;height:15px;background:#fff;border:1px solid #C6C6C6;box-sizing:border-box"></div>
<svg style="position:absolute;left:1011px;top:656px;" width="11" height="8" viewBox="0 0 11 8"><path d="M1.5 1.5h8L5.5 5.5z" fill="#6E6E6E"/></svg>
<div style="position:absolute;left:1px;top:667px;width:1026px;height:27px;background:#E6E6E6"></div>
<div style="position:absolute;left:27px;top:666px;width:980px;height:1px;background:#ABABAB"></div>
<div style="position:absolute;left:1px;top:666px;width:26px;height:1px;background:#C8C8C8"></div>
<svg style="position:absolute;left:26px;top:675px;" width="8" height="10" viewBox="0 0 8 10"><path d="M6 1L1.5 5 6 9z" fill="#C4C4C4"/></svg>
<svg style="position:absolute;left:54px;top:675px;" width="8" height="10" viewBox="0 0 8 10"><path d="M2 1l4.5 4L2 9z" fill="#C4C4C4"/></svg>
<div style="position:absolute;left:101px;top:666px;width:107px;height:25px;background:#fff;border-left:1px solid #ABABAB;border-right:1px solid #ABABAB;box-sizing:border-box"></div>
<div style="position:absolute;left:101px;top:689px;width:107px;height:2px;background:#00733B"></div>
<div class="t" style="left:101px;top:673px;width:107px;text-align:center;color:#1F6B40;font-size:13px;font-weight:bold">microexcel.ru</div>
<svg style="position:absolute;left:240px;top:672px;" width="18" height="18" viewBox="0 0 18 18"><circle cx="9" cy="9" r="7.5" fill="none" stroke="#777" stroke-width="1.2"/><path d="M9 5v8M5 9h8" stroke="#777" stroke-width="1.6"/></svg>
<div style="position:absolute;left:616px;top:674px;width:2px;height:2px;background:#BDBDBD"></div>
<div style="position:absolute;left:616px;top:678px;width:2px;height:2px;background:#BDBDBD"></div>
<div style="position:absolute;left:616px;top:682px;width:2px;height:2px;background:#BDBDBD"></div>
<div style="position:absolute;left:633px;top:673px;width:373px;height:15px;background:#fff;border:1px solid #C6C6C6;box-sizing:border-box"></div>
<div style="position:absolute;left:648px;top:674px;width:1px;height:13px;background:#C6C6C6"></div>
<svg style="position:absolute;left:636px;top:676px;" width="8" height="10" viewBox="0 0 8 10"><path d="M5.5 1.5L1.5 5 5.5 8.5z" fill="#555"/></svg>
<div style="position:absolute;left:963px;top:674px;width:28px;height:13px;background-color:#DADADA;background-image:repeating-linear-gradient(45deg,#CFCFCF 0 1px,transparent 1px 3px)"></div>
<div style="position:absolute;left:991px;top:674px;width:1px;height:13px;background:#C6C6C6"></div>
<svg style="position:absolute;left:994px;top:676px;" width="8" height="10" viewBox="0 0 8 10"><path d="M2.5 1.5L6.5 5 2.5 8.5z" fill="#555"/></svg>
<div style="position:absolute;left:1px;top:695px;width:1026px;height:21px;background:#F3F3F3"></div>
<div style="position:absolute;left:1px;top:694px;width:1026px;height:1px;background:#D6D6D6"></div>
<div class="t" style="left:9px;top:697px;color:#333;font-size:12px">Готово</div>
<svg style="position:absolute;left:60px;top:694px;" width="24" height="20" viewBox="0 0 24 20"><circle cx="8" cy="6.8" r="2.9" fill="#3C3C46"/><path d="M12.3 5.2h5.6v1.8h-5.6z" fill="#3C3C46"/><path d="M17.3 5.2v11.3H6.7V11" fill="none" stroke="#3C3C46" stroke-width="1.1"/><path d="M11 10.5h1.8M14 10.5h1.8M8 12.5h1.8M11 12.5h1.8M14 12.5h1.8M8 14.5h1.8M11 14.5h1.8M14 14.5h1.8" stroke="#3C3C46" stroke-width="1"/></svg>
<div style="position:absolute;left:728px;top:695px;width:37px;height:21px;background-color:#DADADA;background-image:repeating-linear-gradient(45deg,#CFCFCF 0 1px,transparent 1px 3px)"></div>
<svg style="position:absolute;left:737px;top:697px;" width="18" height="16" viewBox="0 0 18 16"><rect x="2.5" y="1.5" width="13" height="13" fill="none" stroke="#6E6E6E"/><path d="M2.5 5.5h13M2.5 10h13M7 1.5v13M11.5 1.5v13" stroke="#6E6E6E"/></svg>
<svg style="position:absolute;left:776px;top:697px;" width="18" height="16" viewBox="0 0 18 16"><rect x="2.5" y="1.5" width="13" height="13" fill="none" stroke="#6E6E6E"/><rect x="5.5" y="4.5" width="7" height="7" fill="none" stroke="#6E6E6E"/><path d="M7 6.5h4M7 9h4" stroke="#6E6E6E"/></svg>
<svg style="position:absolute;left:814px;top:697px;" width="18" height="16" viewBox="0 0 18 16"><path d="M2.5 1.5h13v13h-13z" fill="none" stroke="#6E6E6E"/><path d="M7.5 1.5v5h4v-5" fill="none" stroke="#6E6E6E"/></svg>
<div style="position:absolute;left:846px;top:704px;width:6px;height:2px;background:#555"></div>
<div style="position:absolute;left:856px;top:704px;width:101px;height:1px;background:#B4B4B4"></div>
<div style="position:absolute;left:904px;top:699px;width:5px;height:11px;background:#6E6E6E"></div>
<div style="position:absolute;left:959px;top:704px;width:8px;height:2px;background:#555"></div>
<div style="position:absolute;left:962px;top:701px;width:2px;height:8px;background:#555"></div>
<div class="t" style="left:978px;top:697px;color:#333;font-size:11.5px">100 %</div>
<div style="position:absolute;left:0px;top:0px;width:1px;height:717px;background:#00733B"></div>
<div style="position:absolute;left:1027px;top:0px;width:1px;height:717px;background:#00733B"></div>
<div style="position:absolute;left:0px;top:716px;width:1028px;height:1px;background:#00733B"></div>
</body></html>
